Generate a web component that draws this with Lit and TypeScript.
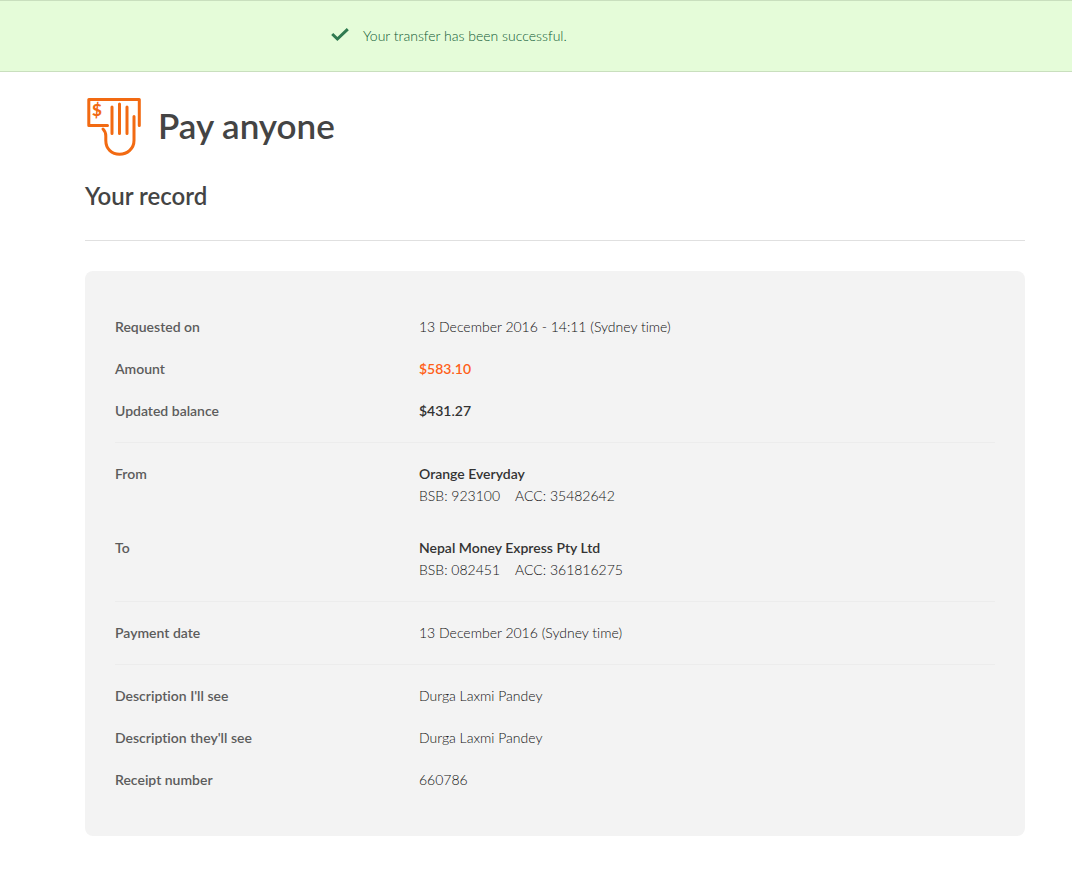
import { LitElement, html, css, nothing } from "lit";
import { customElement, property } from "lit/decorators.js";
import { classMap } from "lit/directives/class-map.js";

interface Entry {
  label: string;
  value: string;
  tone?: "accent" | "strong";
  bsb?: string;
  acc?: string;
}

const groups: Entry[][] = [
  [
    { label: "Requested on", value: "13 December 2016 - 14:11 (Sydney time)" },
    { label: "Amount", value: "$583.10", tone: "accent" },
    { label: "Updated balance", value: "$431.27", tone: "strong" },
  ],
  [
    { label: "From", value: "Orange Everyday", tone: "strong", bsb: "923100", acc: "35482642" },
    { label: "To", value: "Nepal Money Express Pty Ltd", tone: "strong", bsb: "082451", acc: "361816275" },
  ],
  [{ label: "Payment date", value: "13 December 2016 (Sydney time)" }],
  [
    { label: "Description I'll see", value: "Durga Laxmi Pandey" },
    { label: "Description they'll see", value: "Durga Laxmi Pandey" },
    { label: "Receipt number", value: "660786" },
  ],
];

@customElement("success-banner")
class SuccessBanner extends LitElement {
  static styles = css`
    :host {
      display: block;
    }
    .banner {
      display: flex;
      align-items: center;
      gap: 14px;
      padding: 24px 24px 24px 331px;
      border-top: 1px solid #c9dfbe;
      border-bottom: 1px solid #c9dfbe;
      background: #e5fcd9;
      color: #0f5a34;
      font-size: 14px;
      font-weight: 300;
      line-height: 22px;
    }
    .tick {
      flex: none;
      width: 18px;
      height: 16px;
    }
    .message {
      margin: 0;
    }
  `;

  render() {
    return html`
      <div class="banner" role="status">
        <svg class="tick" viewBox="0 0 18 16" aria-hidden="true">
          <path d="M1.2 6 L6.4 11 L16.8 1.2" fill="none" stroke="#2f7a50" stroke-width="3" />
        </svg>
        <p class="message"><slot></slot></p>
      </div>
    `;
  }
}

@customElement("record-card")
class RecordCard extends LitElement {
  @property({ attribute: false }) groups: Entry[][] = [];

  static styles = css`
    :host {
      display: block;
    }
    .card {
      padding: 25px 30px;
      border-radius: 8px;
      background: #f3f3f3;
      font-size: 14px;
      line-height: 22px;
    }
    .group {
      display: flex;
      flex-direction: column;
      margin: 0;
      padding: 10px 0;
    }
    .group + .group {
      border-top: 1px solid #ececec;
    }
    .accounts {
      gap: 10px;
    }
    .row {
      display: grid;
      grid-template-columns: 304px 1fr;
      padding: 10px 0;
    }
    .label {
      color: #5c5c5c;
      font-weight: 600;
    }
    .value {
      margin: 0;
      color: #111;
      font-weight: 300;
    }
    .strong {
      color: #333;
      font-weight: 600;
    }
    .accent {
      color: #ff5f18;
      font-weight: 600;
    }
    .numbers {
      display: grid;
      grid-template-columns: 96px 1fr;
    }
  `;

  private row(entry: Entry) {
    const tone = { strong: entry.tone === "strong", accent: entry.tone === "accent" };
    return html`
      <div class="row">
        <dt class="label">${entry.label}</dt>
        <dd class="value">
          <div class=${classMap(tone)}>${entry.value}</div>
          ${entry.bsb
            ? html`<div class="numbers"><span>BSB: ${entry.bsb}</span><span>ACC: ${entry.acc}</span></div>`
            : nothing}
        </dd>
      </div>
    `;
  }

  render() {
    return html`
      <section class="card">
        ${this.groups.map(
          (group) => html`
            <dl class=${classMap({ group: true, accounts: Boolean(group[0].bsb) })}>
              ${group.map((entry) => this.row(entry))}
            </dl>
          `,
        )}
      </section>
    `;
  }
}

@customElement("app-root")
class AppRoot extends LitElement {
  static styles = css`
    :host {
      display: block;
      min-height: 100vh;
      background: #fff;
      color: #444;
      font-family: Lato, "Open Sans", sans-serif;
      font-variant-ligatures: none;
    }
    .content {
      padding: 24px 47px 48px 85px;
    }
    .heading {
      display: flex;
      align-items: center;
      gap: 15px;
    }
    .icon {
      flex: none;
      width: 58px;
      height: 62px;
    }
    .dollar {
      font-size: 17px;
      font-weight: 900;
      fill: #f26a12;
    }
    .title {
      margin: 0;
      padding-bottom: 4px;
      font-size: 35px;
      line-height: 40px;
      font-weight: 600;
    }
    .subtitle {
      margin: 0 0 30px;
      padding: 22px 0 28px;
      border-bottom: 1px solid #e0e0e0;
      font-size: 24px;
      line-height: 32px;
      font-weight: 600;
    }
  `;

  render() {
    return html`
      <success-banner>Your transfer has been successful.</success-banner>
      <main class="content">
        <header class="heading">
          <svg class="icon" viewBox="0 0 58 62" aria-hidden="true">
            <g fill="none" stroke="#f26a12" stroke-width="3" stroke-linecap="round" stroke-linejoin="round">
              <path d="M22.5 29.5 H3.8 V3.5 H54.3 V29.5" />
              <path d="M27 11 V37.5 M34.5 8 V37.5 M42 11 V37.5" />
              <path d="M18 33 C20 35 20.8 37 20.8 40 V44.5 C20.8 53 27 58.3 34.5 58.3 C42.5 58.3 49 52.5 49 44.5 V20.5" />
            </g>
            <text class="dollar" x="7" y="20">$</text>
          </svg>
          <h1 class="title">Pay anyone</h1>
        </header>
        <h2 class="subtitle">Your record</h2>
        <record-card .groups=${groups}></record-card>
      </main>
    `;
  }
}
